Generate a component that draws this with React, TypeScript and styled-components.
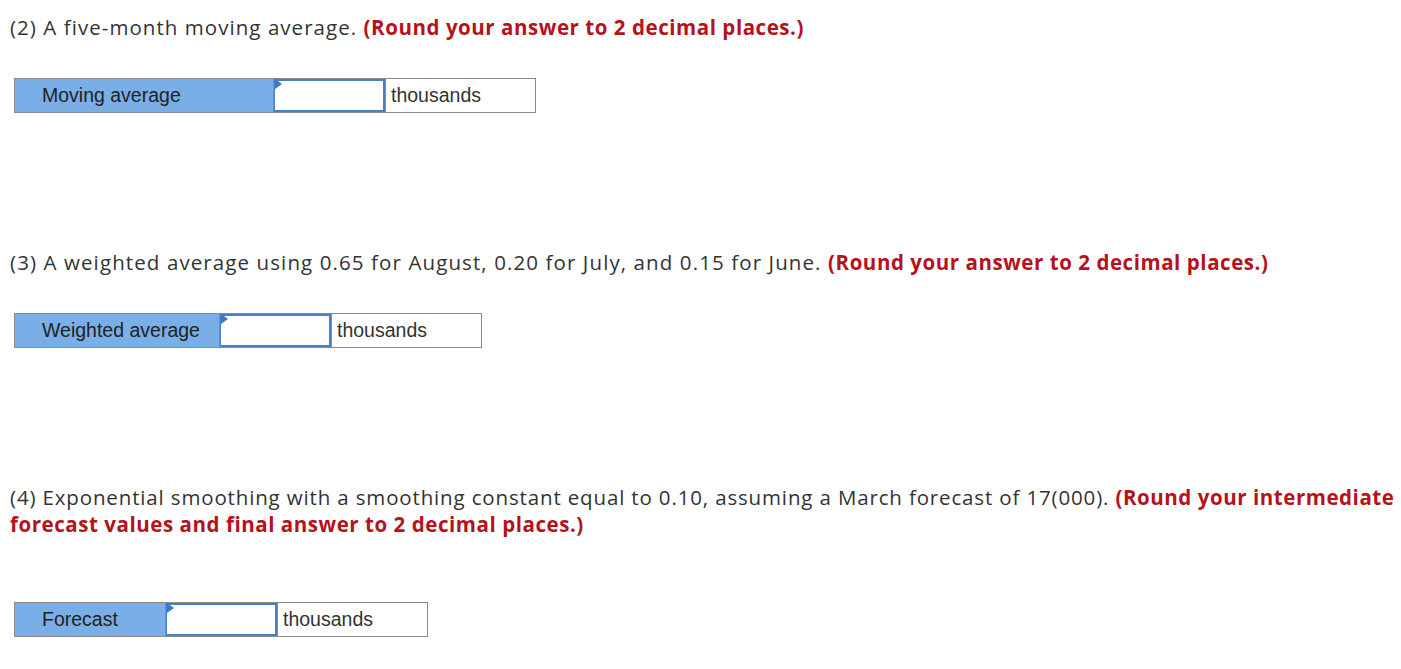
import React from "react";
import styled, { createGlobalStyle } from "styled-components";

const Global = createGlobalStyle`
  html, body { margin: 0; padding: 0; background: #fff; }
  body { font-family: "Open Sans", sans-serif; color: #333; }
`;

const Page = styled.div`
  padding: 14px 0 0 10px;
  display: flex;
  flex-direction: column;
`;

const Section = styled.section<{ $gap: number; $after: number }>`
  display: flex;
  flex-direction: column;
  gap: ${(p) => p.$gap}px;
  margin-bottom: ${(p) => p.$after}px;
`;

const Question = styled.p<{ $track: number }>`
  margin: 0;
  font-family: "Open Sans", sans-serif;
  font-size: 20.5px;
  line-height: 27px;
  letter-spacing: ${(p) => p.$track}px;
  color: #333;
`;

const Hint = styled.strong`
  color: #b5121b;
  font-weight: 700;
  letter-spacing: 0.55px;
`;

const Table = styled.div`
  display: flex;
  margin-left: 4px;
  height: 35px;
  border: 1px solid #8a8a8a;
  box-sizing: border-box;
  align-self: flex-start;
  font-family: "Liberation Sans", Arial, sans-serif;
  font-size: 19.5px;
`;

const Label = styled.div<{ $w: number }>`
  width: ${(p) => p.$w}px;
  box-sizing: border-box;
  background: #7aaee6;
  color: #222;
  padding-left: 27px;
  display: flex;
  align-items: center;
  border-right: 1px solid #8a8a8a;
`;

const InputCell = styled.div`
  position: relative;
  width: 111px;
  box-sizing: border-box;
  border: 2px solid #4b80c3;
  border-left-width: 1px;
  background: #fff;
`;

const Corner = styled.span`
  position: absolute;
  left: 0;
  top: -2px;
  width: 0;
  height: 0;
  border-top: 5px solid transparent;
  border-bottom: 5px solid transparent;
  border-left: 7px solid #3d78c4;
`;

const Unit = styled.div`
  width: 150px;
  box-sizing: border-box;
  border-left: 1px solid #8a8a8a;
  padding-left: 5px;
  display: flex;
  align-items: center;
  color: #333;
`;

function AnswerRow({ label, width }: { label: string; width: number }) {
  return (
    <Table>
      <Label $w={width}>{label}</Label>
      <InputCell>
        <Corner />
      </InputCell>
      <Unit>thousands</Unit>
    </Table>
  );
}

export default function App() {
  return (
    <>
      <Global />
      <Page>
        <Section $gap={37} $after={136}>
          <Question $track={1.05}>
            (2) A five-month moving average. <Hint>(Round your answer to 2 decimal places.)</Hint>
          </Question>
          <AnswerRow label="Moving average" width={259} />
        </Section>
        <Section $gap={37} $after={136}>
          <Question $track={1.1}>
            (3) A weighted average using 0.65 for August, 0.20 for July, and 0.15 for June.{" "}
            <Hint>(Round your answer to 2 decimal places.)</Hint>
          </Question>
          <AnswerRow label="Weighted average" width={205} />
        </Section>
        <Section $gap={64} $after={0}>
          <Question $track={0.85}>
            (4) Exponential smoothing with a smoothing constant equal to 0.10, assuming a March forecast of 17(000).{" "}
            <Hint>(Round your intermediate forecast values and final answer to 2 decimal places.)</Hint>
          </Question>
          <AnswerRow label="Forecast" width={151} />
        </Section>
      </Page>
    </>
  );
}
